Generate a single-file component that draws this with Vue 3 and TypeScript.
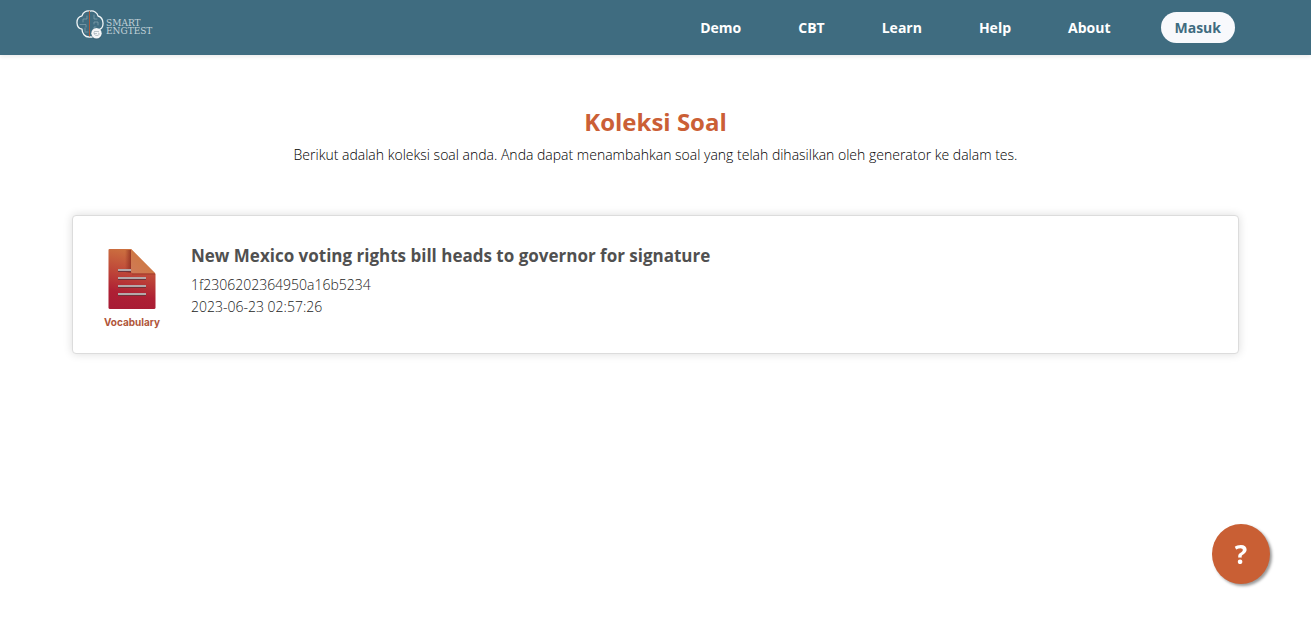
<script setup lang="ts">
interface NavLink {
  label: string
  href: string
}

interface Question {
  id: string
  title: string
  kind: string
  createdAt: string
}

const links: NavLink[] = [
  { label: 'Demo', href: '#demo' },
  { label: 'CBT', href: '#cbt' },
  { label: 'Learn', href: '#learn' },
  { label: 'Help', href: '#help' },
  { label: 'About', href: '#about' },
]

const questions: Question[] = [
  {
    id: '1f2306202364950a16b5234',
    title: 'New Mexico voting rights bill heads to governor for signature',
    kind: 'Vocabulary',
    createdAt: '2023-06-23 02:57:26',
  },
]
</script>

<template>
  <div class="page">
    <header class="topbar">
      <a class="brand" href="#home">
        <svg class="brand-mark" viewBox="0 0 28 30" width="28" height="30" aria-hidden="true">
          <g fill="none" stroke-linecap="round" stroke-linejoin="round">
            <path
              d="M14 1.2C10.500 .2 7 2.200 6 5.800C2.800 6.500 .8 9.500 1 13C1.200 16.500 3.500 18.800 6 19.200C6 23.500 9 27 13 27H16C20 26.500 22 23.500 22 19.800C25 19.200 27.200 16.500 27 13C26.800 9.500 25 6.800 22 6C21.500 2.600 17.500 .2 14 1.200Z"
              stroke="#f1f6f7"
              stroke-width="1.300"
            />
            <path
              d="M11 6V9H7V12M4 14.500H10V17M9 21V18M18 5V9H21M18 14V12H22V15M18 20V17H20M12 22H9"
              stroke="#86a6b2"
              stroke-width=".7"
            />
            <path d="M13.500 1.500V26" stroke="#a8583a" stroke-width="1" />
          </g>
          <circle cx="20.500" cy="24" r="5.500" fill="#2f5667" opacity=".5" />
          <circle cx="20.500" cy="23.200" r="5.200" fill="#f4f6f7" />
          <path
            d="M18 21.500H23M18 23.500H21M22 23C24 23 23.500 25.500 21 25.500C18.500 25.500 18 24 18 22"
            fill="none"
            stroke="#a9b6bc"
            stroke-width=".8"
          />
        </svg>
        <span class="brand-name"><span>SMART</span><span>ENGTEST</span></span>
      </a>
      <nav class="menu">
        <a v-for="link in links" :key="link.label" class="menu-link" :href="link.href">{{ link.label }}</a>
        <button class="login" type="button">Masuk</button>
      </nav>
    </header>

    <main class="content">
      <h1 class="heading">Koleksi Soal</h1>
      <p class="intro">
        Berikut adalah koleksi soal anda. Anda dapat menambahkan soal yang telah dihasilkan oleh generator ke dalam tes.
      </p>

      <article v-for="question in questions" :key="question.id" class="card">
        <div class="kind">
          <svg viewBox="0 0 48 60" width="48" height="60" aria-hidden="true">
            <defs>
              <linearGradient id="sheet" x1=".55" y1="0" x2=".4" y2="1">
                <stop offset="0" stop-color="#cd7440" />
                <stop offset=".45" stop-color="#bd4338" />
                <stop offset=".75" stop-color="#ae2034" />
                <stop offset="1" stop-color="#a81c35" />
              </linearGradient>
              <linearGradient id="fold" x1="0" y1="1" x2="1" y2="0">
                <stop offset="0" stop-color="#cf7a58" />
                <stop offset="1" stop-color="#cf7835" />
              </linearGradient>
              <linearGradient id="crease" x1="0" y1="0" x2="1" y2="0">
                <stop offset="0" stop-color="#8d2c20" stop-opacity="0" />
                <stop offset="1" stop-color="#8d2c20" stop-opacity=".8" />
              </linearGradient>
            </defs>
            <path d="M1.500 0H23L47.500 25V58.500Q47.500 60 46 60H2Q.5 60 .5 58.500V1Q.5 0 1.500 0Z" fill="url(#sheet)" />
            <path d="M17 1H23V24H17Z" fill="url(#crease)" />
            <path d="M10 22H23M10 30H38M10 38H38M10 46H38" stroke="#70333a" stroke-width="2" />
            <path d="M10 21H23M10 29H38M10 37H38M10 45H38" stroke="#b4a9aa" stroke-width="2" />
            <path d="M23 0L47.500 24.500H25Q23 24.500 23 22.500Z" fill="url(#fold)" />
            <path d="M24 25H47" stroke="#a13d2c" stroke-width="1" />
          </svg>
          <span class="kind-label">{{ question.kind }}</span>
        </div>
        <div class="details">
          <h2 class="title">{{ question.title }}</h2>
          <p class="meta">{{ question.id }}</p>
          <p class="meta">{{ question.createdAt }}</p>
        </div>
      </article>
    </main>

    <button class="help" type="button" aria-label="Bantuan">?</button>
  </div>
</template>

<style>
body {
  margin: 0;
  background: #fff;
}
</style>

<style scoped>
.page {
  min-height: 100vh;
  font-family: "Open Sans", "Noto Sans", sans-serif;
  font-size: 14px;
  color: #000;
}

.topbar {
  display: flex;
  align-items: center;
  justify-content: space-between;
  box-sizing: border-box;
  height: 55px;
  padding: 0 76px;
  background: #3f6c80;
  box-shadow: 0 2px 4px rgba(0, 0, 0, 0.08);
}

.brand {
  display: flex;
  align-items: center;
  gap: 2px;
  padding-bottom: 6px;
  color: #c3d3d9;
  text-decoration: none;
}

.brand-mark {
  display: block;
}

.brand-name {
  display: flex;
  flex-direction: column;
  padding-top: 4px;
  font-family: "DejaVu Serif", serif;
  font-size: 9px;
  line-height: 8px;
}

.menu {
  display: flex;
  align-items: center;
  gap: 57px;
}

.menu-link {
  color: #fff;
  font-weight: 700;
  line-height: 20px;
  text-decoration: none;
}

.login {
  height: 31px;
  margin-left: -7px;
  padding: 0 14px;
  border: 0;
  border-radius: 16px;
  background: #f8f9fc;
  color: #3f6c80;
  font: inherit;
  font-weight: 700;
}

.content {
  padding: 48px 72px;
}

.heading {
  margin: 0;
  color: #cb5f36;
  font-size: 24px;
  line-height: 38px;
  text-align: center;
}

.intro {
  margin: 2px 0 48px;
  font-weight: 300;
  line-height: 24px;
  text-align: center;
}

.card {
  display: flex;
  gap: 30px;
  box-sizing: border-box;
  padding: 24px 30px;
  border: 1px solid #dcdcdc;
  border-radius: 4px;
  background: #fff;
  box-shadow: 0 0 10px rgba(0, 0, 0, 0.14);
}

.kind {
  display: flex;
  flex-direction: column;
  align-items: center;
  gap: 6px;
  min-width: 58px;
  padding-top: 9px;
}

.kind-label {
  color: #b0563a;
  font-family: Inter, sans-serif;
  font-size: 10px;
  font-weight: 700;
  line-height: 14px;
}

.title {
  margin: 0 0 2px;
  color: #505050;
  font-size: 17px;
  line-height: 32px;
}

.meta {
  margin: 0;
  color: #222;
  font-weight: 300;
  line-height: 22px;
}

.help {
  position: fixed;
  right: 41px;
  bottom: 44px;
  width: 58px;
  height: 60px;
  padding: 0;
  border: 0;
  border-radius: 50%;
  background: #c95f34;
  box-shadow: 2px 2px 3px #999;
  color: #fff;
  font: inherit;
  font-size: 26px;
  font-weight: 700;
}
</style>
